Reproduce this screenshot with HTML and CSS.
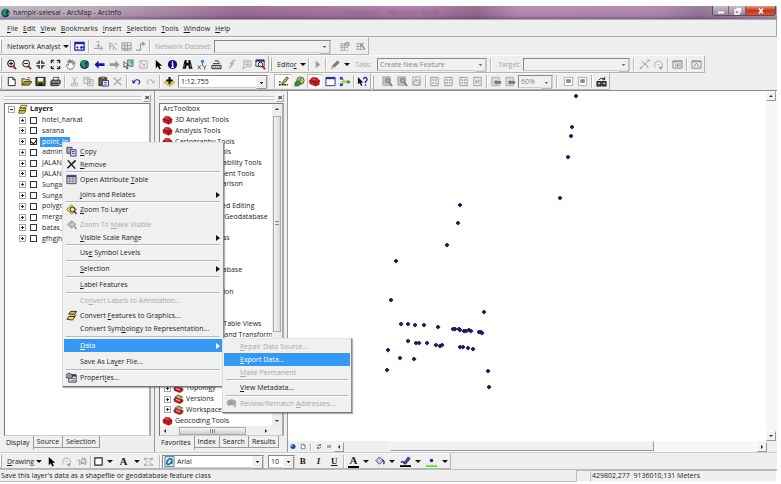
FILE: index.html
```
<!DOCTYPE html>
<html lang="en">
<head>
<meta charset="utf-8">
<title>hampir-selesai - ArcMap - ArcInfo</title>
<link rel="stylesheet" href="styles.css">
</head>
<body>
<svg class="defs" aria-hidden="true">
  <symbol id="globe" viewBox="0 0 12 12"><circle cx="6" cy="6" r="5" fill="#14327c"/><path d="M3 2l4-1 1 2-2 2 2 2-2 3-3-2-1-3zM9 4l2 2-1 3-1-1z" fill="#1f9a4a"/></symbol>
  <symbol id="zoomin" viewBox="0 0 12 12"><circle cx="5.500" cy="5" r="3.600" fill="#fff" stroke="#222" stroke-width="1.200"/><path d="M3.500 5h4M5.500 3v4" stroke="#111" stroke-width="1.200"/><path d="M8 8l3 3" stroke="#a42020" stroke-width="2"/></symbol>
  <symbol id="zoomout" viewBox="0 0 12 12"><circle cx="5.500" cy="5" r="3.600" fill="#fff" stroke="#333" stroke-width="1.200"/><path d="M3.500 5h4" stroke="#111" stroke-width="1.200"/><path d="M8 8l3 3" stroke="#a42020" stroke-width="2"/></symbol>
  <symbol id="shrink" viewBox="0 0 12 12"><path d="M4.500 1.500v3h-3M7.500 1.500v3h3M4.500 10.500v-3h-3M7.500 10.500v-3h3" fill="none" stroke="#222" stroke-width="1.500"/></symbol>
  <symbol id="expand" viewBox="0 0 12 12"><path d="M1.500 4.500v-3h3M7.500 1.500h3v3M1.500 7.500v3h3M7.500 10.500h3v-3" fill="none" stroke="#222" stroke-width="1.400"/><path d="M2 2l2.500 2.500M10 2L7.500 4.500M2 10l2.500-2.500M10 10L7.500 7.500" stroke="#666"/></symbol>
  <symbol id="hand" viewBox="0 0 12 12"><path d="M4 11L1 7l1-1 2 1-1-5 1-.5 1 3 0-3.500h1l.5 3.500 1-3h1L8.500 6 10 3l1 .5-1.500 5L8 11z" fill="#fff" stroke="#555" stroke-width=".8"/></symbol>
  <symbol id="left" viewBox="0 0 12 12"><path d="M.5 6L5 1.500v3h6.500v3H5v3z" fill="#0a18b8"/></symbol>
  <symbol id="right" viewBox="0 0 12 12"><path d="M11.500 6L7 1.500v3H.5v3H7v3z" fill="#999"/></symbol>
  <symbol id="selfeat" viewBox="0 0 12 12"><path d="M5 1h6v7H7L5 6z" fill="#8ed0d8" stroke="#555" stroke-width=".8"/><path d="M1 3l5 4-2 .3 1.500 3-1.300.5-1.300-3L1 9z" fill="#fff" stroke="#222" stroke-width=".8"/><path d="M8 3h2v2z" fill="#333"/></symbol>
  <symbol id="clearsel" viewBox="0 0 12 12"><path d="M2 2h8v8H2z" fill="none" stroke="#aaa"/><path d="M3 3l5 5M8 5L5 8" stroke="#aaa"/></symbol>
  <symbol id="cursor" viewBox="0 0 12 12"><path d="M3 1v9l2.200-2L7 11.500l1.600-.8L7 7.400h3z" fill="#000"/></symbol>
  <symbol id="info" viewBox="0 0 12 12"><circle cx="6" cy="6" r="5" fill="#10107c"/><path d="M6 2.500v1.600M4.800 5.300H6.300V9M4.500 9.200h3" stroke="#fff" stroke-width="1.400"/></symbol>
  <symbol id="find" viewBox="0 0 12 12"><path d="M3 1h2v3h2V1h2l2.500 9.500h-4L7 7H5l-.5 3.500h-4z" fill="#111"/><path d="M2.500 6l-.7 3M9 6l.8 3" stroke="#bbb" stroke-width=".7"/></symbol>
  <symbol id="xy" viewBox="0 0 12 12"><circle cx="6" cy="2.500" r="1.800" fill="#2488e0"/><path d="M1 7l3 4M4 7l-3 4M6.500 7L8.300 9 10 7M8.300 9v2.500M6 4v3" stroke="#357" fill="none"/></symbol>
  <symbol id="measure" viewBox="0 0 12 12"><path d="M1 7h10v3.500H1z" fill="#eee" stroke="#222"/><path d="M3 8v1.500M5 8v1.500M7 8v1.500M9 8v1.500" stroke="#222" stroke-width=".7"/><path d="M2 5h7M7 2l3 3M4 2h4" stroke="#333"/></symbol>
  <symbol id="bolt" viewBox="0 0 12 12"><path d="M8 1L4 5.500h2L3.500 11 8.500 5h-2L10 1z" fill="#bbb" stroke="#999" stroke-width=".5"/></symbol>
  <symbol id="note" viewBox="0 0 12 12"><path d="M3 2h8v6H6l-4 3 1-3z" fill="none" stroke="#aaa"/><path d="M4.500 4h5M4.500 6h5" stroke="#aaa"/></symbol>
  <symbol id="viewer" viewBox="0 0 12 12"><path d="M1 1h9v7H1z" fill="#fff" stroke="#223070"/><path d="M1 2h9" stroke="#223070" stroke-width="2"/><circle cx="6" cy="6" r="2.500" fill="#dde" stroke="#222"/><path d="M8 8l3 3" stroke="#b02020" stroke-width="2"/></symbol>
  <symbol id="navwin" viewBox="0 0 12 12"><path d="M1 1.500h10v8.500H1z" fill="#fff" stroke="#2020a0" stroke-width="1.400"/><path d="M1 2.500h10" stroke="#2020a0" stroke-width="2"/><path d="M4 5.500v3M2.500 7h2" stroke="#333"/><path d="M6 7l2.500-2.500V6H11v2H8.500v1.500z" fill="#1840d0"/></symbol>
  <symbol id="net1" viewBox="0 0 12 12"><path d="M1 8h5V3M4 5h4M6 8h5M9 6v4M4 1h3" stroke="#aaa" fill="none" stroke-width="1.200"/></symbol>
  <symbol id="net2" viewBox="0 0 12 12"><path d="M3 1v9M3 3h3M3 7l4-3M7 6l4 4M7 6v4M9 4l1-2" stroke="#aaa" fill="none" stroke-width="1.100"/></symbol>
  <symbol id="net3" viewBox="0 0 12 12"><path d="M1 2h10v8H1zM1 5h10M1 8h10M4 2v9M7 2v9" stroke="#999" fill="none"/></symbol>
  <symbol id="net4" viewBox="0 0 12 12"><path d="M1 10h5V3h4M8 1l2.500 2L8 5" stroke="#999" fill="none" stroke-width="1.300"/></symbol>
  <symbol id="net5" viewBox="0 0 12 12"><path d="M1 3h5M1 5h5M1 7h9M1 10h9M3 2v8M6 2v8" stroke="#aaa"/><circle cx="9" cy="3.500" r="2.200" fill="#bbb" stroke="#999"/></symbol>
  <symbol id="net6" viewBox="0 0 12 12"><path d="M1 3h4M1 6h5M1 9h9M3 3v6M6 5v5" stroke="#aaa"/><path d="M5 2l6 7M9 2L6 6" stroke="#888" stroke-width="1.300"/></symbol>
  <symbol id="play" viewBox="0 0 12 12"><path d="M4 2l5 4-5 4z" fill="#999"/></symbol>
  <symbol id="pencil" viewBox="0 0 12 12"><path d="M1 11l1.500-4L8 1.500 10.500 4 5 9z" fill="#777"/><path d="M1 11l1.500-4L5 9z" fill="#bbb"/></symbol>
  <symbol id="split" viewBox="0 0 12 12"><path d="M1 11L11 1M3 2l2 3 3 1 2 4" stroke="#999" fill="none"/><path d="M1 9h2v2M9 1h2v2" stroke="#aaa" fill="none"/></symbol>
  <symbol id="rotate" viewBox="0 0 12 12"><path d="M3 9.500a4.300 4.300 0 1 1 5.500.5" fill="none" stroke="#aaa"/><path d="M6.500 9l3.500-.5-1 3zM5 6h2" fill="#999" stroke="#999" stroke-width=".7"/></symbol>
  <symbol id="attrs" viewBox="0 0 12 12"><path d="M1 2h10v8H1z" fill="#eee" stroke="#888"/><path d="M1 3h10M6 5v4M3 5.500h2M3 7.500h2M7 5.500h3M7 7.500h3" stroke="#888"/></symbol>
  <symbol id="sketch" viewBox="0 0 12 12"><path d="M1 2h10v8H1z" fill="#eee" stroke="#888"/><path d="M1 3h10M3 8.500l3-4 3 4" stroke="#888" fill="none"/></symbol>
  <symbol id="new" viewBox="0 0 12 12"><path d="M2.500 1.500h5l2.500 2.500v6.500H2.500zM7.500 1.500V4H10" fill="#fff" stroke="#222"/></symbol>
  <symbol id="open" viewBox="0 0 12 12"><path d="M1 10V3h3l1 1h4v2" fill="#e8e060" stroke="#444"/><path d="M1 10l2.500-4H12L9 10z" fill="#9c9420" stroke="#333" stroke-width=".8"/><path d="M7 2q2-1.500 3 1" fill="none" stroke="#333" stroke-width=".8"/></symbol>
  <symbol id="save" viewBox="0 0 12 12"><path d="M1 1.500h10v9H1z" fill="#59601a" stroke="#111"/><path d="M3 2h6v4H3z" fill="#eee"/><path d="M4 8h4v2.500H4z" fill="#111"/></symbol>
  <symbol id="print" viewBox="0 0 12 12"><path d="M4 1.500h5.500L8.500 5H3z" fill="#fff" stroke="#222" stroke-width=".8"/><path d="M1 5.500L3 4.500h8V8L9 10.500H1z" fill="#888" stroke="#222"/><path d="M1 8h8" stroke="#222"/></symbol>
  <symbol id="cut" viewBox="0 0 12 12"><path d="M4 1l3 7M8 1L5 8" stroke="#aaa"/><circle cx="4" cy="9.500" r="1.500" fill="none" stroke="#aaa"/><circle cx="8" cy="9.500" r="1.500" fill="none" stroke="#aaa"/></symbol>
  <symbol id="copyg" viewBox="0 0 12 12"><path d="M1 1.500h6v6.500H1zM5 4h6v6.500H5z" fill="#eee" stroke="#aaa"/><path d="M6.500 6h3M6.500 8h3M2.500 3.500h3" stroke="#aaa"/></symbol>
  <symbol id="paste" viewBox="0 0 12 12"><path d="M1 2h8.500v8.500H1z" fill="#68682a" stroke="#222"/><path d="M3.500 1h4v2h-4z" fill="#ccc" stroke="#222" stroke-width=".7"/><path d="M5 5h6.500v6H5z" fill="#fff" stroke="#2a2a8a"/><path d="M6.500 7h3.500M6.500 9h3.500" stroke="#2a2a8a" stroke-width=".8"/></symbol>
  <symbol id="crossg" viewBox="0 0 12 12"><path d="M2 2l8 8M10 2l-8 8" stroke="#999" stroke-width="1.200"/></symbol>
  <symbol id="cross" viewBox="0 0 12 12"><path d="M2 1.500l8 9M10.500 1.500L1.500 10" stroke="#111" stroke-width="1.600"/></symbol>
  <symbol id="undo" viewBox="0 0 12 12"><path d="M3 6.500q3-4 6-1.500 1.500 2-1 4" fill="none" stroke="#2a2a9a" stroke-width="1.200"/><path d="M1 4l1 4.500L5 7z" fill="#2a2a9a"/></symbol>
  <symbol id="redo" viewBox="0 0 12 12"><path d="M9 6.500q-3-4-6-1.500-1.500 2 1 4" fill="none" stroke="#bbb" stroke-width="1.200"/><path d="M11 4l-1 4.500L7 7z" fill="#bbb"/></symbol>
  <symbol id="adddata" viewBox="0 0 12 12"><path d="M0 7l6-4 6 4-6 4.500z" fill="#f0e020" stroke="#776" stroke-width=".6"/><path d="M6 1v8M2.500 5h7" stroke="#111" stroke-width="2.200"/></symbol>
  <symbol id="edittb" viewBox="0 0 12 12"><path d="M4 8L9.500 1l2 1.500L6 9z" fill="#d8b830" stroke="#222" stroke-width=".8"/><path d="M1 9.500h10" stroke="#111" stroke-width="1.600" stroke-dasharray="2 1"/><path d="M1 6.500h2" stroke="#2030a0" stroke-width="1.500"/></symbol>
  <symbol id="catalog" viewBox="0 0 12 12"><circle cx="7" cy="5" r="4" fill="#d8d030" stroke="#555"/><circle cx="7" cy="4" r="2" fill="#5ab0a0"/><path d="M1 7l4-2 3 3-3 3H1z" fill="#2a9040" stroke="#333" stroke-width=".6"/></symbol>
  <symbol id="toolbox" viewBox="0 0 12 12"><path d="M.5 5l3-3.500 5 .5 3 3-.5 4.500L7 11 1 8.500z" fill="#cf1b22" stroke="#8a1015" stroke-width=".6"/><path d="M.5 5L7 7l4.500-2M7 7v4" stroke="#7a0c10" fill="none"/><path d="M3 3l4 1" stroke="#f49" stroke-width="1"/></symbol>
  <symbol id="toolset" viewBox="0 0 12 12"><path d="M.5 6.500L2 4l9.500 3-.5 2.500L7.500 11.500 1 9z" fill="#c02024" stroke="#5a1410" stroke-width=".7"/><path d="M2 3.500L5.500 1 11 3.500 7.500 6.500z" fill="#caa860" stroke="#432" stroke-width=".8"/><path d="M3 6.500l4.500 1.700" stroke="#fff" stroke-width=".9"/></symbol>
  <symbol id="cmdwin" viewBox="0 0 12 12"><path d="M1 1.500h10v9H1z" fill="#fff" stroke="#203080"/><path d="M1 2.500h10" stroke="#203080" stroke-width="2"/></symbol>
  <symbol id="model" viewBox="0 0 12 12"><path d="M3 2l3 4H3m3 0h3M3 9.500L6 6" stroke="#555" fill="none"/><path d="M1 1h3v3H1z" fill="#2040d0"/><path d="M1 8h3v3H1z" fill="#2040d0"/><circle cx="6" cy="6" r="1.800" fill="#e8d020"/><path d="M8.500 5H12v3H8.500z" fill="#20a040"/></symbol>
  <symbol id="help" viewBox="0 0 12 12"><path d="M1 1v8l2-1.500L4.500 11l1.300-.6L4.500 7H7z" fill="#111"/><path d="M7 3.500Q7.500 1.500 9.300 1.500 11.300 2 11 4q-.3 1.300-1.700 2v1.500M9.300 9v1.700" fill="none" stroke="#2020a0" stroke-width="1.500"/></symbol>
  <symbol id="pagemag" viewBox="0 0 12 12"><path d="M1 1h8v9H1z" fill="#ccc" stroke="#999"/><circle cx="6" cy="5" r="2.500" fill="#aaa" stroke="#777"/><path d="M8 7l3 4" stroke="#777" stroke-width="1.800"/></symbol>
  <symbol id="pagehand" viewBox="0 0 12 12"><path d="M2 1h8v9H2z" fill="#eee" stroke="#aaa"/><path d="M4 10L2 7l2-1 1-3 1 2 2-1 2 2-1 4z" fill="#ddd" stroke="#888" stroke-width=".8"/></symbol>
  <symbol id="pagefit" viewBox="0 0 12 12"><path d="M2 1.500h8v9H2z" fill="#eee" stroke="#999"/><path d="M4 3.500l1 1.500M8 3.500L7 5M4 8.500L5 7M8 8.500L7 7" stroke="#888" stroke-width="1.200"/></symbol>
  <symbol id="page11" viewBox="0 0 12 12"><path d="M2 1.500h8v9H2z" fill="#eee" stroke="#999"/><path d="M4.500 4v4M7.500 4v4M6 5v.8M6 7v.8" stroke="#888"/></symbol>
  <symbol id="pageleft" viewBox="0 0 12 12"><path d="M1 1.500h8v9H1z" fill="#ddd" stroke="#aaa"/><path d="M3 6.500L6 4v1.500h5v3H6V10z" fill="#777"/></symbol>
  <symbol id="draft" viewBox="0 0 12 12"><path d="M1.500 1.500h9v9h-9z" fill="#fff" stroke="#aaa"/><path d="M3.500 3.500h5v4h-5z" fill="#888"/></symbol>
  <symbol id="ddp" viewBox="0 0 12 12"><path d="M1 6h4.500v5H1zM6.500 6H11v5H6.500z" fill="#555" stroke="#111"/><path d="M2.500 8h2M8 8h2" stroke="#fff"/><path d="M3 4.500Q5 1 9 3M9.500 1v3H7" fill="none" stroke="#222"/></symbol>
  <symbol id="layers" viewBox="0 0 12 12"><path d="M1 11l2-3h7l-2 3z" fill="#f0e040" stroke="#222" stroke-width=".8"/><path d="M1.500 8l2-3h7l-2 3z" fill="#e0cc20" stroke="#222" stroke-width=".8"/><path d="M2.500 4.500l2-3h7l-2 3z" fill="#f8f060" stroke="#222" stroke-width=".8"/></symbol>
  <symbol id="copy" viewBox="0 0 12 12"><path d="M1 1.500h5.500V8H1z" fill="#aaa" stroke="#444"/><path d="M5 4h6v7H5z" fill="#dfe2fa" stroke="#34348a"/><path d="M6.500 6h3M6.500 8h3" stroke="#34348a"/></symbol>
  <symbol id="table" viewBox="0 0 12 12"><path d="M1 1.500h10v9H1z" fill="#ddd" stroke="#445"/><path d="M1 2.500h10" stroke="#3a3a80" stroke-width="2"/><path d="M1 5.500h10M1 8h10M4 3v7M7.500 3v7" stroke="#778" stroke-width=".8"/></symbol>
  <symbol id="zoomlayer" viewBox="0 0 12 12"><path d="M.5 6L6 1l5.500 5L6 11z" fill="#f0e030" stroke="#664" stroke-width=".8"/><circle cx="7" cy="6" r="2.600" fill="#ddd" stroke="#222"/><path d="M9 8l2.500 3" stroke="#922" stroke-width="1.800"/></symbol>
  <symbol id="zoomlayerg" viewBox="0 0 12 12"><path d="M.5 6L6 1l5.500 5L6 11z" fill="#bbb"/><circle cx="7" cy="6" r="2.600" fill="#ccc" stroke="#999"/><path d="M9 8l2.500 3" stroke="#999" stroke-width="1.800"/></symbol>
  <symbol id="props" viewBox="0 0 12 12"><path d="M3 3h8v8H3z" fill="#fff" stroke="#223"/><path d="M3 4h8" stroke="#336" stroke-width="2"/><path d="M5 7h5M5 9h5" stroke="#556"/><path d="M0 3l3-2 4 2v3L4 7 0 6z" fill="#999" stroke="#222" stroke-width=".7"/></symbol>
  <symbol id="match" viewBox="0 0 12 12"><path d="M1 3l5-2 5 2v4l-1 4-2-3H5L3 9 1 7z" fill="#aaa"/><path d="M3 4h4M4 6h4" stroke="#888"/></symbol>
  <symbol id="stack" viewBox="0 0 12 12"><path d="M1 10l2-3h7l-3 4z" fill="#f0e040" stroke="#222"/><path d="M3 4.500L5 1.500h6.500l-2 3zM4 7h5l2-2" fill="#d8d020" stroke="#222"/></symbol>
  <symbol id="rect" viewBox="0 0 12 12"><path d="M2 2h8v8H2z" fill="#fff" stroke="#222" stroke-width="1.200"/></symbol>
  <symbol id="group" viewBox="0 0 12 12"><path d="M1 5l3-1v6l3-3 3 3V2L7 4V1M3 7h6" fill="none" stroke="#aaa"/><path d="M6 4h5v4H6z" fill="none" stroke="#aaa"/></symbol>
  <symbol id="vertices" viewBox="0 0 12 12"><path d="M2 3h8L7 6l3 4H2l2-4z" fill="none" stroke="#aaa"/><path d="M1 2h2v2H1zM9 2h2v2H9zM9 9h2v2H9zM1 9h2v2H1z" fill="#aaa"/></symbol>
  <symbol id="truetype" viewBox="0 0 12 12"><path d="M1 .5h10v11H1z" fill="#cfe6ee" stroke="#579"/><path d="M8.500 3v5.500M8.500 4Q6 1.500 4 5t0 4q2 1 4.500-3" fill="none" stroke="#157080" stroke-width="1.700"/></symbol>
  <symbol id="bucket" viewBox="0 0 12 12"><path d="M2 5l4-4 4 4-4 4z" fill="#ccd" stroke="#448"/><path d="M9 4q3 2 1.500 5" fill="none" stroke="#339" stroke-width="1.500"/><path d="M1 11h10" stroke="#f0ecc0" stroke-width="1.500"/></symbol>
  <symbol id="linecol" viewBox="0 0 12 12"><path d="M4 8L9 1l2 2-5 6z" fill="#556" stroke="#228"/><path d="M1 7q2-2 4 1" fill="none" stroke="#228" stroke-width="1.500"/><path d="M0 11h12" stroke="#000" stroke-width="2"/></symbol>
  <symbol id="markcol" viewBox="0 0 12 12"><circle cx="6" cy="5" r="1.900" fill="#2020b0"/><path d="M0 11h12" stroke="#60e020" stroke-width="2"/></symbol>
  <symbol id="dot" viewBox="0 0 12 12"><circle cx="6" cy="6" r="5" fill="#1d47a8"/><circle cx="4" cy="4" r="2" fill="#7cc0f0"/></symbol>
  <symbol id="refresh" viewBox="0 0 12 12"><path d="M2 5q2-4 7-2M10 7q-2 4-7 2M9 1v3H6M3 11V8h3" fill="none" stroke="#444" stroke-width="1.400"/></symbol>
  <symbol id="pause" viewBox="0 0 12 12"><path d="M4 3v6M8 3v6" stroke="#666" stroke-width="2"/></symbol>
</svg>

<div class="app">
  <header class="titlebar">
    <svg class="ico"><use href="#globe"/></svg>
    <h1>hampir-selesai - ArcMap - ArcInfo</h1>
    <span class="ghost">Document1 - Microsoft Word</span>
    <div class="winbtns">
      <button aria-label="Minimize"><svg viewBox="0 0 12 8"><path d="M3 5.500h6" stroke="#fff" stroke-width="2"/></svg></button>
      <button aria-label="Restore"><svg viewBox="0 0 12 8"><path d="M4 3h4v4H4zM5.500 1.500h4v4" fill="none" stroke="#fff" stroke-width="1.300"/></svg></button>
      <button class="close" aria-label="Close"><svg viewBox="0 0 12 8"><path d="M4 1.500l4 5M8 1.500l-4 5" stroke="#fff" stroke-width="1.600"/></svg></button>
    </div>
  </header>

  <nav class="menubar">
    <button><u>F</u>ile</button><button><u>E</u>dit</button><button><u>V</u>iew</button><button><u>B</u>ookmarks</button><button><u>I</u>nsert</button><button><u>S</u>election</button><button><u>T</u>ools</button><button><u>W</u>indow</button><button><u>H</u>elp</button>
  </nav>

  <div class="row">
    <div class="bar network">
      <i class="grip"></i>
      <button class="text">Network Analyst</button>
      <button class="caret" aria-label="Network Analyst menu"></button>
      <i class="sep"></i>
      <button aria-label="Network Analyst window"><svg><use href="#navwin"/></svg></button>
      <i class="sep"></i>
      <div class="group"><button aria-label="Create location"><svg><use href="#net1"/></svg></button><button aria-label="Select location"><svg><use href="#net2"/></svg></button><button aria-label="Solve"><svg><use href="#net3"/></svg></button><button aria-label="Directions"><svg><use href="#net4"/></svg></button></div>
      <i class="sep"></i>
      <label class="off" for="dataset">Network Dataset:</label>
      <div class="combo off"><select id="dataset"><option></option></select></div>
      <div class="group pad"><button aria-label="Identify network"><svg><use href="#net5"/></svg></button><button aria-label="Build network"><svg><use href="#net6"/></svg></button></div>
    </div>
  </div>

  <div class="row">
    <div class="bar tools">
      <i class="grip"></i>
      <div class="group">
        <button aria-label="Zoom in"><svg><use href="#zoomin"/></svg></button><button aria-label="Zoom out"><svg><use href="#zoomout"/></svg></button><button aria-label="Fixed zoom in"><svg><use href="#shrink"/></svg></button><button aria-label="Fixed zoom out"><svg><use href="#expand"/></svg></button><button aria-label="Pan"><svg><use href="#hand"/></svg></button><button aria-label="Full extent"><svg><use href="#globe"/></svg></button><button aria-label="Back"><svg><use href="#left"/></svg></button><button aria-label="Forward"><svg><use href="#right"/></svg></button><button aria-label="Select features"><svg><use href="#selfeat"/></svg></button><button aria-label="Clear selection"><svg><use href="#clearsel"/></svg></button><button aria-label="Select elements"><svg><use href="#cursor"/></svg></button><button aria-label="Identify"><svg><use href="#info"/></svg></button><button aria-label="Find"><svg><use href="#find"/></svg></button><button aria-label="Go to XY"><svg><use href="#xy"/></svg></button><button aria-label="Measure"><svg><use href="#measure"/></svg></button><button aria-label="Hyperlink"><svg><use href="#bolt"/></svg></button><button aria-label="HTML popup"><svg><use href="#note"/></svg></button><button aria-label="Viewer window"><svg><use href="#viewer"/></svg></button>
      </div>
    </div>
    <div class="bar editor">
      <i class="grip"></i>
      <button class="text">Edito<u>r</u></button>
      <button class="caret" aria-label="Editor menu"></button>
      <i class="sep"></i>
      <button aria-label="Edit tool"><svg><use href="#play"/></svg></button>
      <i class="sep"></i>
      <button aria-label="Sketch tool"><svg><use href="#pencil"/></svg></button>
      <button class="caret" aria-label="Sketch tools"></button>
      <label class="off" for="task">Task:</label>
      <div class="combo off"><select id="task"><option>Create New Feature</option></select></div>
      <i class="sep"></i>
      <label class="off" for="target">Target:</label>
      <div class="combo off"><select id="target"><option></option></select></div>
      <i class="sep"></i>
      <div class="group"><button aria-label="Split"><svg><use href="#split"/></svg></button><button aria-label="Rotate"><svg><use href="#rotate"/></svg></button></div>
      <i class="sep"></i>
      <button aria-label="Attributes"><svg><use href="#attrs"/></svg></button>
      <i class="sep"></i>
      <button aria-label="Sketch properties"><svg><use href="#sketch"/></svg></button>
    </div>
  </div>

  <div class="row last">
    <div class="bar standard">
      <i class="grip"></i>
      <div class="group"><button aria-label="New"><svg><use href="#new"/></svg></button><button aria-label="Open"><svg><use href="#open"/></svg></button><button aria-label="Save"><svg><use href="#save"/></svg></button><button aria-label="Print"><svg><use href="#print"/></svg></button></div>
      <i class="sep"></i>
      <div class="group"><button aria-label="Cut"><svg><use href="#cut"/></svg></button><button aria-label="Copy"><svg><use href="#copyg"/></svg></button><button aria-label="Paste"><svg><use href="#paste"/></svg></button><button aria-label="Delete"><svg><use href="#crossg"/></svg></button></div>
      <i class="sep"></i>
      <div class="group"><button aria-label="Undo"><svg><use href="#undo"/></svg></button><button aria-label="Redo"><svg><use href="#redo"/></svg></button></div>
      <i class="sep"></i>
      <button aria-label="Add data"><svg><use href="#adddata"/></svg></button>
      <div class="combo"><select aria-label="Map scale"><option>1:12.755</option></select></div>
      <i></i>
      <button class="pressed" aria-label="Editor toolbar"><svg><use href="#edittb"/></svg></button>
      <div class="group"><button aria-label="ArcCatalog"><svg><use href="#catalog"/></svg></button><button class="pressed" aria-label="ArcToolbox"><svg><use href="#toolbox"/></svg></button><button aria-label="Command line"><svg><use href="#cmdwin"/></svg></button><button aria-label="ModelBuilder"><svg><use href="#model"/></svg></button></div>
      <i class="sep"></i>
      <button aria-label="What's this"><svg><use href="#help"/></svg></button>
    </div>
    <div class="bar layout">
      <i class="grip"></i>
      <div class="group"><button aria-label="Page zoom in"><svg><use href="#pagemag"/></svg></button><button aria-label="Page zoom out"><svg><use href="#pagemag"/></svg></button><button aria-label="Page pan"><svg><use href="#pagehand"/></svg></button></div>
      <i class="sep"></i>
      <div class="group"><button aria-label="Page fixed zoom in"><svg><use href="#pagefit"/></svg></button><button aria-label="Page fixed zoom out"><svg><use href="#pagefit"/></svg></button><button aria-label="Whole page"><svg><use href="#pagefit"/></svg></button><button aria-label="Page 100%"><svg><use href="#page11"/></svg></button></div>
      <i class="sep"></i>
      <div class="group"><button aria-label="Previous page extent"><svg><use href="#pageleft"/></svg></button><button aria-label="Next page extent"><svg><use href="#pageleft"/></svg></button></div>
      <div class="combo off"><select aria-label="Page zoom"><option>60%</option></select></div>
      <i class="sep"></i>
      <div class="group"><button aria-label="Draft mode"><svg><use href="#draft"/></svg></button><button aria-label="Focus data frame"><svg><use href="#draft"/></svg></button></div>
      <i class="sep"></i>
      <button aria-label="Change layout"><svg><use href="#ddp"/></svg></button>
    </div>
  </div>

  <main class="work">
    <section class="pane">
      <div class="panehead"><i></i><button aria-label="Close contents">×</button></div>
      <div class="box">
        <ul class="toc">
          <li class="root"><i class="ex open"></i><svg class="ico"><use href="#layers"/></svg><b>Layers</b></li>
          <li><i class="ex"></i><label><input type="checkbox"><span>hotel_harkat</span></label></li>
          <li><i class="ex"></i><label><input type="checkbox"><span>sarana</span></label></li>
          <li><i class="ex"></i><label><input type="checkbox" checked><span class="sel">point_lp</span></label></li>
          <li><i class="ex"></i><label><input type="checkbox"><span>admin_</span></label></li>
          <li><i class="ex"></i><label><input type="checkbox"><span>JALAN_</span></label></li>
          <li><i class="ex"></i><label><input type="checkbox"><span>JALAN_</span></label></li>
          <li><i class="ex"></i><label><input type="checkbox"><span>Sungai</span></label></li>
          <li><i class="ex"></i><label><input type="checkbox"><span>Sungai</span></label></li>
          <li><i class="ex"></i><label><input type="checkbox"><span>polygon</span></label></li>
          <li><i class="ex"></i><label><input type="checkbox"><span>mergan</span></label></li>
          <li><i class="ex"></i><label><input type="checkbox"><span>batas_k</span></label></li>
          <li><i class="ex"></i><label><input type="checkbox"><span>gfhgjh</span></label></li>
        </ul>
      </div>
      <div class="tabs"><button class="on">Display</button><button>Source</button><button>Selection</button></div>
    </section>

    <section class="pane">
      <div class="panehead"><i></i><button aria-label="Close toolbox">×</button></div>
      <div class="box scroller">
        <ul class="tbx">
          <li>ArcToolbox</li>
          <li><svg class="ico"><use href="#toolbox"/></svg>3D Analyst Tools</li>
          <li><svg class="ico"><use href="#toolbox"/></svg>Analysis Tools</li>
          <li><svg class="ico"><use href="#toolbox"/></svg>Cartography Tools</li>
          <li><svg class="ico"><use href="#toolbox"/></svg>Conversion Tools</li>
          <li><svg class="ico"><use href="#toolbox"/></svg>Data Interoperability Tools</li>
          <li><svg class="ico"><use href="#toolbox"/></svg>Data Management Tools</li>
          <li class="sub"><i class="ex"></i><svg class="ico"><use href="#toolset"/></svg>Data Comparison</li>
          <li class="sub"><i class="ex"></i><svg class="ico"><use href="#toolset"/></svg></li>
          <li class="sub"><i class="ex"></i><svg class="ico"><use href="#toolset"/></svg>Disconnected Editing</li>
          <li class="sub"><i class="ex"></i><svg class="ico"><use href="#toolset"/></svg>Distributed Geodatabase</li>
          <li class="sub"><i class="ex"></i><svg class="ico"><use href="#toolset"/></svg></li>
          <li class="sub"><i class="ex"></i><svg class="ico"><use href="#toolset"/></svg>Feature Class</li>
          <li class="sub"><i class="ex"></i><svg class="ico"><use href="#toolset"/></svg></li>
          <li class="sub"><i class="ex"></i><svg class="ico"><use href="#toolset"/></svg></li>
          <li class="sub"><i class="ex"></i><svg class="ico"><use href="#toolset"/></svg>File Geodatabase</li>
          <li class="sub"><i class="ex"></i><svg class="ico"><use href="#toolset"/></svg></li>
          <li class="sub"><i class="ex"></i><svg class="ico"><use href="#toolset"/></svg>Generalization</li>
          <li class="sub"><i class="ex"></i><svg class="ico"><use href="#toolset"/></svg></li>
          <li class="sub"><i class="ex"></i><svg class="ico"><use href="#toolset"/></svg></li>
          <li class="sub"><i class="ex"></i><svg class="ico"><use href="#toolset"/></svg>Layers and Table Views</li>
          <li class="sub"><i class="ex"></i><svg class="ico"><use href="#toolset"/></svg>Projections and Transform</li>
          <li class="sub"><i class="ex"></i><svg class="ico"><use href="#toolset"/></svg></li>
          <li class="sub"><i class="ex"></i><svg class="ico"><use href="#toolset"/></svg></li>
          <li class="sub"><i class="ex"></i><svg class="ico"><use href="#toolset"/></svg></li>
          <li class="sub"><i class="ex"></i><svg class="ico"><use href="#toolset"/></svg></li>
          <li class="sub"><i class="ex"></i><svg class="ico"><use href="#toolset"/></svg>Topology</li>
          <li class="sub"><i class="ex"></i><svg class="ico"><use href="#toolset"/></svg>Versions</li>
          <li class="sub"><i class="ex"></i><svg class="ico"><use href="#toolset"/></svg>Workspace</li>
          <li><svg class="ico"><use href="#toolbox"/></svg>Geocoding Tools</li>
        </ul>
        <div class="vbar"><i class="up"></i><i class="thumb"></i><i class="down"></i></div>
        <div class="hbar"><i class="lt"></i><i class="thumb"></i><i class="rt"></i></div>
      </div>
      <div class="tabs"><button class="on">Favorites</button><button>Index</button><button>Search</button><button>Results</button></div>
    </section>

    <section class="map">
      <svg class="canvas" role="img" aria-label="Map points">
        <defs><marker id="m" viewBox="0 0 6 6" refX="3" refY="3" markerWidth="5" markerHeight="5" markerUnits="userSpaceOnUse"><path d="M3 0L6 3 3 6 0 3z" fill="#2b1458"/></marker></defs>
        <polyline class="pts" points="288,5 284,36 283,45 280,66 272,107 172,114 170,132 159,154 108,170 103,209 196,221 113,233 120,233 127,234 136,234 150,236 165,238 167,238 171,238 172,239 176,240 178,240 181,239 183,240 191,241 193,241 194,242 120,250 128,252 131,252 139,252 148,254 152,255 154,254 172,256 175,256 180,257 185,258 100,259 99,279 112,267 126,268 200,280 201,296"/>
      </svg>
      <div class="mapv"><i class="up"></i><i class="down"></i></div>
      <div class="maph">
        <button aria-label="Data view"><svg><use href="#dot"/></svg></button><button aria-label="Layout view"><svg><use href="#new"/></svg></button><i class="sep"></i><button aria-label="Refresh"><svg><use href="#refresh"/></svg></button><button aria-label="Pause drawing"><svg><use href="#pause"/></svg></button><i class="lt raised"></i>
        <div class="track"><i></i></div>
        <i class="rt raised"></i>
      </div>
    </section>

    <ul class="menu context">
      <li><svg><use href="#copy"/></svg><span><u>C</u>opy</span></li>
      <li><svg><use href="#cross"/></svg><span><u>R</u>emove</span></li>
      <li class="line"></li>
      <li><svg><use href="#table"/></svg><span>Open Attribute <u>T</u>able</span></li>
      <li class="roomy more"><span><u>J</u>oins and Relates</span></li>
      <li class="line"></li>
      <li><svg><use href="#zoomlayer"/></svg><span><u>Z</u>oom To Layer</span></li>
      <li class="roomy off"><svg><use href="#zoomlayerg"/></svg><span>Zoom To <u>M</u>ake Visible</span></li>
      <li class="more"><span><u>V</u>isible Scale Range</span></li>
      <li class="line"></li>
      <li><span>Us<u>e</u> Symbol Levels</span></li>
      <li class="line wide"></li>
      <li class="more"><span><u>S</u>election</span></li>
      <li class="line wide"></li>
      <li><span><u>L</u>abel Features</span></li>
      <li class="line wide"></li>
      <li class="off"><span>Co<u>n</u>vert Labels to Annotation...</span></li>
      <li class="roomy"><svg><use href="#stack"/></svg><span>Convert <u>F</u>eatures to Graphics...</span></li>
      <li><span>Convert Sym<u>b</u>ology to Representation...</span></li>
      <li class="line wide"></li>
      <li class="more hot"><span><u>D</u>ata</span>
        <ul class="menu fly">
          <li class="off"><span><u>R</u>epair Data Source...</span></li>
          <li class="hot"><span><u>E</u>xport Data...</span></li>
          <li class="off"><span><u>M</u>ake Permanent</span></li>
          <li class="line"></li>
          <li><span><u>V</u>iew Metadata...</span></li>
          <li class="line wide"></li>
          <li class="off"><svg><use href="#match"/></svg><span>Review/Rematch <u>A</u>ddresses...</span></li>
        </ul>
      </li>
      <li class="line blank"></li>
      <li><span>Save As La<u>y</u>er File...</span></li>
      <li class="line wide"></li>
      <li><svg><use href="#props"/></svg><span>Propert<u>i</u>es...</span></li>
    </ul>
  </main>

  <div class="row draw">
    <div class="bar drawing">
      <i class="grip"></i>
      <button class="text"><u>D</u>rawing</button>
      <button class="caret" aria-label="Drawing menu"></button>
      <div class="group"><button aria-label="Select"><svg><use href="#cursor"/></svg></button><button aria-label="Rotate element"><svg><use href="#rotate"/></svg></button><button aria-label="Zoom to element"><svg><use href="#group"/></svg></button></div>
      <i class="sep"></i>
      <button aria-label="Rectangle"><svg><use href="#rect"/></svg></button>
      <button class="caret" aria-label="Shapes"></button>
      <button class="serif">A</button>
      <button class="caret" aria-label="Text tools"></button>
      <button aria-label="Edit vertices"><svg><use href="#vertices"/></svg></button>
      <i class="sep"></i>
      <div class="combo font"><svg><use href="#truetype"/></svg><select aria-label="Font"><option>Arial</option></select></div>
      <i></i>
      <div class="combo"><select aria-label="Font size"><option>10</option></select></div>
      <div class="group style"><button><b>B</b></button><button><em>I</em></button><button><u>U</u></button></div>
      <i class="sep"></i>
      <button class="serif under">A</button>
      <button class="caret" aria-label="Font color"></button>
      <button aria-label="Fill color"><svg><use href="#bucket"/></svg></button>
      <button class="caret" aria-label="Fill colors"></button>
      <button aria-label="Line color"><svg><use href="#linecol"/></svg></button>
      <button class="caret" aria-label="Line colors"></button>
      <button aria-label="Marker color"><svg><use href="#markcol"/></svg></button>
      <button class="caret" aria-label="Marker colors"></button>
    </div>
  </div>

  <footer class="status">
    <span>Save this layer's data as a shapefile or geodatabase feature class</span>
    <span class="cell"></span>
    <span class="cell">429802,277&nbsp; 9136010,131 Meters</span>
  </footer>
</div>
</body>
</html>
```
FILE: styles.css
```
* { box-sizing: border-box; }
html, body { height: 100%; }
body { margin: 0; padding: 6px 4px 2px 0; background: #fff; overflow: hidden; font: 7px/11px "Open Sans", "Noto Sans", sans-serif; color: #1c1c1c; }
ul { list-style: none; margin: 0; padding: 0; }
button { font: inherit; color: inherit; border: 0; background: none; padding: 0; margin: 0; display: flex; align-items: center; justify-content: center; white-space: nowrap; }
button u { text-underline-offset: 1px; }
i { font-style: normal; }
.defs { position: absolute; width: 0; height: 0; }
.ico { width: 11px; height: 10px; flex: none; }

.app { height: 100%; display: flex; flex-direction: column; background: #efefef; }

.titlebar { height: 13px; flex: none; display: flex; align-items: center; background: linear-gradient(rgba(255,255,255,.1), rgba(255,255,255,0) 70%, rgba(70,30,80,.35)), linear-gradient(90deg, #b9b2bc 0, #b5a3b4 90px, #a687a4 150px, #94668f 240px, #a878a4 420px, #8d6286 475px, #b184ae 520px, #a982a8 660px, #8f6f91 700px, #b79eb8 100%); }
.titlebar h1 { font: inherit; margin: 0 0 0 2px; }
.titlebar .ghost { margin-left: 222px; color: #84577f; filter: blur(1px); }
.winbtns { margin: 0 1px 3px auto; height: 10px; display: grid; grid-template-columns: 16px 17px 29px; border: 1px solid #5d4a60; border-top: 0; border-radius: 0 0 3px 3px; overflow: hidden; }
.winbtns button { background: linear-gradient(#c9bccb, #978499); border-right: 1px solid #756178; }
.winbtns svg { width: 12px; height: 8px; }
.winbtns .close { background: linear-gradient(#e2a08e, #c8321a 50%, #d9552f); border: 0; }

.menubar { height: 18px; flex: none; display: flex; align-items: center; gap: 5px; padding-left: 7px; border: 1px solid #a8a8a8; border-width: 1px 1px 1px 0; }

.row { height: 18px; flex: none; display: flex; gap: 1px; }
.row.last { border-bottom: 1px solid #8a8a8a; }
.bar { display: grid; align-items: center; border: 1px solid; border-color: #fafafa #b4b4b4 #b4b4b4 transparent; border-left: 0; }
.bar svg { width: 11px; height: 11px; }
.bar > *, .group > button { min-width: 0; }
.bar label, .bar .text { white-space: nowrap; padding-left: 3px; justify-content: flex-start; }
.bar .off { color: #a6a6a6; }
.group { display: flex; }
.group > button { flex: 1; }
.group.pad { padding-left: 6px; }
.grip { width: 2px; height: 14px; border: 1px solid; border-color: #fff #aaa #aaa #fff; }
.sep { width: 2px; height: 13px; justify-self: center; border-left: 1px solid #b8b8b8; border-right: 1px solid #fff; }
.pressed { height: 15px; background: #fbfbfb; border: 1px solid; border-color: #bbb #eee #eee #bbb; }
.caret::before { content: ""; border: 3px solid transparent; border-top: 3px solid #111; border-bottom: 0; }
.network { grid-template-columns: 4px 58px 7px 3px 15px 4px 57px 4px 62px 117px 37px; }
.tools { grid-template-columns: 4px 264px; }
.editor { grid-template-columns: 4px 25px 8px 4px 13px 4px 14px 10px 25px 110px 8px 28px 107px 7px 29px 4px 15px 4px 15px; }
.standard { grid-template-columns: 4px 59px 4px 58px 4px 29px 3px 17px 90px 6px 18px 60px 3px 15px; }
.layout { grid-template-columns: 8px 44px 3px 58px 4px 29px 35px 8px 28px 5px 15px; }
.drawing { grid-template-columns: 4px 30px 10px 45px 3px 13px 9px 19px 7px 17px 5px 102px 4px 27px 47px 4px 15px 10px 16px 10px 16px 10px 16px 11px; }

.combo { position: relative; height: 13px; background: #fff; border: 1px solid; border-color: #888 #ccc #ccc #888; display: flex; align-items: center; }
.combo select { appearance: none; border: 0; margin: 0; padding: 0 10px 0 2px; background: none; font: inherit; color: inherit; width: 100%; height: 11px; }
.combo::after { content: ""; position: absolute; right: 0; top: 0; width: 9px; height: 11px; border: 1px solid; border-color: #f6f6f6 #999 #999 #f6f6f6; background: #eee conic-gradient(from -45deg at 50% 100%, #222 90deg, transparent 0) center / 5px 2px no-repeat; pointer-events: none; }
.combo.off { background: #f1f1f1; color: #888; }
.combo.off::after { filter: opacity(.6); }
.combo.font svg { flex: none; margin-left: 1px; }

.work { position: relative; flex: 1; min-height: 0; display: grid; grid-template-columns: 155px 133px 1fr; }
.pane { display: flex; flex-direction: column; min-width: 0; min-height: 0; padding: 1px 3px 1px 4px; border-right: 1px solid #999; }
.panehead { height: 11px; flex: none; display: flex; align-items: center; gap: 2px; }
.panehead i { flex: 1; height: 4px; border: 1px solid #c4c4c4; border-width: 1px 0; background: #fff; }
.panehead button { width: 8px; height: 8px; font: 700 8px/8px "Liberation Sans", sans-serif; border: 1px solid; border-color: #fff #aaa #aaa #fff; }
.box { flex: 1; min-height: 0; background: #fff; border: 1px solid; border-color: #777 #ccc #ccc #777; border-right: 2px solid #aaa; overflow: hidden; }
.toc, .tbx { display: grid; grid-auto-rows: 1fr; }
.toc { height: 140px; }
.tbx { height: 322px; overflow: hidden; }
.toc li, .tbx li { display: flex; align-items: center; white-space: nowrap; min-height: 0; line-height: 10px; }
.toc li { padding-left: 14px; }
.toc li.root { padding-left: 3px; gap: 2px; }
.toc label { display: flex; align-items: center; }
.toc input { appearance: none; width: 7px; height: 7px; margin: 0 3px 0 4px; border: 1px solid #333; background: #fff; flex: none; }
.toc input:checked::before { content: ""; display: block; width: 3px; height: 5px; margin: -1px 0 0 1px; border: solid #000; border-width: 0 1px 1px 0; transform: rotate(40deg); }
.toc span { padding: 0 2px; line-height: 10px; }
.sel { background: #3399f5; color: #fff; }
.ex { width: 7px; height: 7px; flex: none; border: 1px solid #a8a8a8; background: linear-gradient(#222, #222) center / 3px 1px no-repeat, linear-gradient(#222, #222) center / 1px 3px no-repeat, #fff; }
.ex.open { background: linear-gradient(#222, #222) center / 3px 1px no-repeat, #fff; }
.tbx li { gap: 2px; padding-left: 2px; }
.tbx li:first-child { padding-left: 3px; }
.tbx .sub { padding-left: 4px; }

.scroller { display: grid; grid-template: 1fr 9px / 1fr 10px; }
.vbar { display: flex; flex-direction: column; align-items: center; background: #ececec; }
.vbar .thumb { flex: 1; align-self: stretch; margin: 2px 1px 84px; border: 1px solid #aaa; background: linear-gradient(#888, #888) 50% 49% / 4px 1px no-repeat, linear-gradient(#888, #888) 50% 50% / 4px 1px no-repeat, linear-gradient(90deg, #f6f6f6, #d8d8d8); }
.hbar { grid-column: 1 / -1; display: flex; align-items: center; background: #efefef; padding: 0 13px 0 2px; }
.hbar .thumb { flex: 1; height: 8px; margin: 0 17px 0 11px; border: 1px solid #aaa; background: repeating-linear-gradient(90deg, #888 0 1px, transparent 1px 2px) center / 5px 4px no-repeat, linear-gradient(#f8f8f8, #ccc); }
.up, .down, .lt, .rt { display: flex; align-items: center; justify-content: center; flex: none; width: 10px; height: 10px; }
.up::before { content: ""; border: 2px solid transparent; border-bottom-color: #333; border-top: 0; }
.down::before { content: ""; border: 2px solid transparent; border-top-color: #333; border-bottom: 0; }
.lt::before { content: ""; border: 2px solid transparent; border-right-color: #222; border-left: 0; }
.rt::before { content: ""; border: 2px solid transparent; border-left-color: #222; border-right: 0; }
.hbar .lt, .hbar .rt { width: 6px; }
.tabs { height: 15px; flex: none; display: flex; align-items: flex-start; }
.tabs button { height: 12px; padding: 0 3px; border: 1px solid #999; border-width: 0 1px 1px 0; }
.tabs .on { height: 14px; padding: 0 3px 0 2px; border-color: transparent #999 transparent transparent; }

.map { display: grid; grid-template: 1fr 11px / 1fr 11px; min-height: 0; min-width: 0; }
.canvas { width: 100%; height: 100%; background: #fff; min-height: 0; }
.pts { fill: none; stroke: none; marker: url(#m); }
.mapv { display: flex; flex-direction: column; justify-content: space-between; background: #f6f6f6; }
.mapv i, .raised { background: #f0f0f0; border: 1px solid; border-color: #fafafa #999 #999 #fafafa; }
.maph { grid-column: 1 / -1; display: flex; align-items: center; padding-right: 10px; }
.maph button { width: 10px; }
.maph svg { width: 6px; height: 7px; }
.maph .sep { margin: 0 2px; height: 8px; }
.track { flex: 1; height: 11px; margin-left: 46px; background: #f7f7f7; }
.track i { display: block; width: 72%; height: 10px; background: #efefef; border: 1px solid; border-color: #f6f6f6 #999 #999 #f6f6f6; }

.menu { position: absolute; z-index: 2; background: #f0f0f0; border: 1px solid; border-color: #e4e4e4 #8c8c8c #777 #ddd; padding: 2px 1px; box-shadow: 1px 1px 1px rgba(0,0,0,.3); color: #1c1c1c; }
.context { left: 62px; top: 51px; width: 162px; }
.menu li { position: relative; height: 13px; display: flex; align-items: center; padding-left: 16px; white-space: nowrap; }
.menu li > svg { position: absolute; left: 2px; top: 1px; width: 11px; height: 11px; }
.menu li.roomy { margin-top: 2px; }
.menu li.line { height: 2px; margin: 0 2px; background: linear-gradient(#b8b8b8 1px, #fafafa 1px); }
.menu li.wide { height: 3px; background: linear-gradient(transparent 1px, #b8b8b8 1px, #b8b8b8 2px, #fafafa 2px); }
.menu li.blank { background: none; }
.menu li.off { color: #a9a9a9; }
.menu li.hot { background: #3399f5; color: #fff; }
.context > li.hot { margin: 1px 0; }
.more::after { content: ""; position: absolute; right: 2px; top: 4px; border: 3px solid transparent; border-left: 4px solid #111; border-right: 0; }
.more.hot::after { border-left-color: #fff; }
.menu.fly { left: 100%; top: -1px; width: 130px; padding-top: 1px; }

.row.draw { border-top: 1px solid #ccc; border-bottom: 1px solid #bbb; }
.serif { font: 700 11px/11px "Liberation Serif", serif; }
.under { border-bottom: 2px solid #000; height: 13px; margin: 0 2px; }
.style { font: 700 9px/11px "Liberation Serif", serif; }
.status { height: 12px; flex: none; display: grid; grid-template-columns: 1fr 14px 187px; align-items: stretch; border-bottom: 1px solid #bbb; padding-left: 1px; line-height: 11px; white-space: nowrap; }
.cell { border: 1px solid; border-color: #bbb #fafafa #fafafa #bbb; padding-left: 1px; line-height: 10px; }
```
